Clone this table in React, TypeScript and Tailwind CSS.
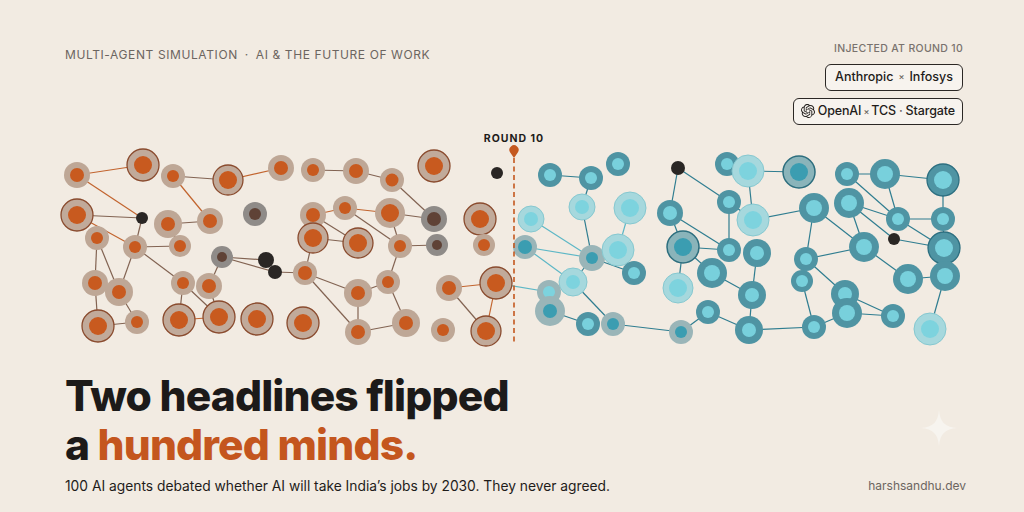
import React from "react";
import { SiOpenai } from "react-icons/si";

type N = [number, number, string, number, number];

const nodes: Record<string, N> = {
  A1: [77, 175, "o", 13, 7],
  A2: [143, 165, "oo", 16, 9],
  A3: [173, 176, "o", 12, 6],
  A4: [228, 180, "oo", 15, 9],
  A5: [281, 168, "o", 13, 7],
  A6: [77, 215, "oo", 16, 9],
  K1: [142, 218, "k", 6, 0],
  A7: [168, 224, "o", 14, 7],
  A8: [210, 221, "o", 13, 7],
  G1: [255, 214, "g", 12, 6],
  A9: [97, 238, "o", 12, 6],
  A10: [135, 247, "o", 12, 6],
  A11: [180, 246, "o", 11, 6],
  G2: [222, 257, "g", 11, 5],
  K2: [266, 260, "k", 8, 0],
  K3: [275, 272, "k", 7, 0],
  A12: [95, 283, "o", 13, 7],
  A13: [119, 292, "o", 14, 7],
  A14: [183, 283, "o", 12, 6],
  A15: [209, 286, "o", 13, 7],
  A16: [98, 326, "oo", 16, 9],
  A17: [137, 322, "o", 12, 6],
  A18: [179, 320, "oo", 16, 9],
  A19: [219, 317, "oo", 16, 9],
  A20: [257, 319, "oo", 16, 9],
  B1: [313, 170, "o", 12, 6],
  B2: [356, 171, "o", 13, 7],
  B3: [392, 180, "o", 12, 6.5],
  B4: [434, 166, "oo", 16, 9],
  K4: [497, 173, "k", 6, 0],
  B5: [313, 215, "o", 13, 7],
  B6: [345, 208, "o", 12, 6],
  B7: [390, 213, "o", 15, 9],
  G3: [434, 219, "g", 13, 7],
  B8: [480, 219, "oo", 16, 9],
  B9: [313, 238, "oo", 15, 9],
  B10: [358, 243, "oo", 15, 9],
  B11: [400, 246, "o", 12, 6],
  G4: [437, 245, "g", 11, 5],
  B12: [484, 245, "o", 11, 6],
  B13: [305, 273, "o", 12, 7],
  B14: [358, 293, "o", 14, 7],
  B15: [388, 282, "o", 12, 6],
  B16: [449, 288, "o", 13, 7],
  B17: [496, 283, "oo", 16, 9],
  B18: [303, 323, "oo", 16, 9],
  B19: [358, 332, "o", 13, 7],
  B20: [406, 323, "o", 14, 7],
  B21: [443, 330, "o", 12, 6],
  B22: [486, 331, "oo", 15, 9],

  T1: [550, 175, "t", 12, 6],
  T2: [591, 178, "t", 12, 6],
  T3: [618, 164, "t", 12, 6],
  K5: [678, 168, "k", 7, 0],
  T4: [727, 164, "t", 12, 6],
  T5: [748, 171, "tp", 16, 9],
  T6: [582, 207, "tp", 13, 7],
  T7: [630, 208, "tp", 16, 9],
  T8: [531, 219, "tp", 13, 7],
  T9: [670, 213, "t", 13, 7],
  T10: [729, 202, "t", 12, 6],
  T11: [753, 220, "tp", 16, 9],
  T12: [525, 247, "tg", 12, 7],
  T13: [592, 258, "tg", 13, 6],
  T14: [618, 250, "tp", 16, 9],
  T15: [683, 247, "to", 16, 9],
  T16: [729, 250, "t", 12, 6],
  T17: [757, 253, "t", 14, 7],
  T18: [634, 273, "t", 12, 6],
  T19: [573, 282, "tp", 14, 7],
  T20: [712, 273, "t", 15, 8],
  T21: [549, 292, "tgl", 12, 6],
  T22: [678, 288, "tp", 15, 9],
  T23: [752, 295, "t", 14, 7],
  T24: [550, 311, "tg", 15, 7],
  T25: [588, 324, "t", 12, 6],
  T26: [613, 324, "tg", 12, 6],
  T27: [708, 312, "t", 12, 6],
  T28: [681, 332, "tg", 12, 6],
  T29: [749, 330, "t", 14, 7],
  U1: [799, 172, "to", 16, 9],
  U2: [847, 174, "t", 12, 6],
  U3: [885, 174, "t", 15, 8],
  U4: [943, 180, "tto", 16, 9],
  U5: [814, 208, "t", 15, 8],
  U6: [849, 203, "t", 15, 8],
  U7: [898, 219, "t", 12, 6],
  U8: [943, 219, "t", 12, 6],
  U9: [864, 247, "t", 15, 8],
  K6: [894, 239, "k", 6, 0],
  U10: [944, 248, "tto", 16, 9],
  U11: [806, 259, "t", 12, 6],
  U12: [802, 281, "t", 11, 6],
  U13: [908, 279, "t", 15, 8],
  U14: [945, 276, "t", 15, 8],
  U15: [845, 294, "t", 14, 7],
  U16: [847, 313, "t", 15, 8],
  U17: [893, 316, "t", 12, 6],
  U18: [814, 327, "t", 12, 6],
  U19: [930, 329, "tp", 16, 9],
};

const edgeSpec = `
A1-A2 o, A1-K1 o, A3-A4 b, A4-A5 o, A3-A8 o, A6-K1 b, A6-A10 o, K1-A10 b, A7-A8 b, A7-A11 b, A10-A11 b,
A9-A12 b, A9-A13 b, A10-A13 b, A12-A13 b, A12-A16 b, A13-A17 b, A16-A17 b, A10-A14 b, A14-A18 b, A14-A19 b,
A15-G2 b, A15-A19 b, A18-A19 o, G2-K2 b, G2-K3 b, K3-B13 b,
B1-B2 b, B2-B3 b, B3-G3 b, B5-B6 o, B6-B7 o, B7-G3 b, B5-B10 b, B6-B11 b, B7-B11 b, B9-B10 b, B5-B9 b, B9-B13 b,
B11-G4 b, B11-B15 b, B13-B14 b, B13-B19 b, B14-B15 b, B14-B19 b, B15-B20 b, B19-B20 b, B16-B17 o, B16-B22 b, B17-B22 o, B17-T21 l,
T1-T2 d, T2-T6 d, T6-T13 d, T7-T14 l, T8-T13 l, T12-T13 l, T12-T19 l, T13-T18 d, T14-T13 l, T19-T13 d, T19-T26 d, T19-T21 l,
T24-T25 d, T26-T28 d, T28-T27 d, T27-T29 d, T29-U18 d, K5-T9 d, K5-T10 d, T9-T15 d, T9-T16 d, T15-T16 d, T15-T22 d, T15-T20 d,
T10-T16 d, T10-T11 d, T4-T5 d, T5-T11 d, T11-U5 d, T5-U1 d, T20-T23 d, T17-T23 d, T23-T29 d,
U2-U3 d, U3-U4 d, U2-U7 d, U3-U7 d, U4-U8 d, U7-U8 d, U6-U7 d, U6-U9 d, U6-K6 d, U7-U10 d, K6-U10 d, U8-U10 d, U5-U9 d,
U5-U11 d, U11-U9 d, U11-U12 d, U11-U15 d, U9-U13 d, U13-U14 d, U10-U14 d, U14-U19 d, U15-U17 d, U16-U17 d, U15-U16 d, U12-U18 d, U18-U16 d
`;

const edgeColors: Record<string, string> = {
  o: "#c2642e",
  b: "#826352",
  d: "#2f7d90",
  l: "#5db7c6",
};

const edges = edgeSpec
  .split(",")
  .map((s) => s.trim())
  .filter(Boolean)
  .map((s) => {
    const [pair, c] = s.split(/\s+/);
    const [a, b] = pair.split("-");
    return { a, b, c };
  });

const style: Record<string, { ring: string; inner: string; stroke?: string; sw?: number }> = {
  o: { ring: "#bea796", inner: "#c85a1f" },
  oo: { ring: "#c1aa9a", inner: "#c85a1f", stroke: "#8a4b2e", sw: 1.3 },
  g: { ring: "#8f8b88", inner: "#5f4236" },
  k: { ring: "#2a2624", inner: "#2a2624" },
  t: { ring: "#4f94a3", inner: "#78d0dc" },
  tto: { ring: "#4f94a3", inner: "#78d0dc", stroke: "#2d6f80", sw: 1.3 },
  tp: { ring: "#a6d8dd", inner: "#7dd3de", stroke: "#86c8d0", sw: 1 },
  tg: { ring: "#9ab5b8", inner: "#3b9db1" },
  tgl: { ring: "#9ab5b8", inner: "#7dd3de" },
  to: { ring: "#8ab4ba", inner: "#3b9db1", stroke: "#2d6e7e", sw: 1.5 },
};

function Network() {
  return (
    <svg width={1024} height={225} viewBox="0 125 1024 225" className="block shrink-0">
      {edges.map((e, i) => {
        const A = nodes[e.a];
        const B = nodes[e.b];
        if (!A || !B) return null;
        return (
          <line key={i} x1={A[0]} y1={A[1]} x2={B[0]} y2={B[1]} stroke={edgeColors[e.c]} strokeWidth={1.2} />
        );
      })}
      {Object.entries(nodes).map(([id, n]) => {
        const [x, y, t, R, r] = n;
        const s = style[t];
        if (t === "k") return <circle key={id} cx={x} cy={y} r={R} fill={s.ring} />;
        return (
          <g key={id}>
            <circle cx={x} cy={y} r={R} fill={s.ring} stroke={s.stroke} strokeWidth={s.sw} />
            <circle cx={x} cy={y} r={r} fill={s.inner} />
          </g>
        );
      })}
      <text
        x={514}
        y={142}
        textAnchor="middle"
        fontSize={10.5}
        fontWeight={700}
        letterSpacing={1}
        fill="#1f1c1a"
        fontFamily="Inter, sans-serif"
      >
        ROUND 10
      </text>
      <path d="M514 158 L510.2 152.5 A4.6 4.6 0 1 1 517.8 152.5 Z" fill="#c4581f" />
      <line x1={514} y1={158} x2={514} y2={345} stroke="#c4581f" strokeWidth={1.6} strokeDasharray="5 3.5" />
    </svg>
  );
}

export default function App() {
  return (
    <div
      className="w-[1024px] h-[512px] bg-[#f2ebe2] flex flex-col overflow-hidden"
      style={{ fontFamily: "Inter, 'Noto Sans', sans-serif" }}
    >
      <div className="h-[125px] shrink-0 flex justify-between pl-[65px] pr-[61px] pt-[44px]">
        <div className="text-[12px] leading-none tracking-[0.05em] text-[#6c6560] mt-[5px]">
          MULTI-AGENT SIMULATION <span className="mx-[3px]">·</span> AI &amp; THE FUTURE OF WORK
        </div>
        <div className="flex flex-col items-end">
          <div className="text-[10.5px] leading-none font-medium tracking-[0.03em] text-[#79726d]">
            INJECTED AT ROUND 10
          </div>
          <div className="mt-[9px] h-[28px] px-[9px] flex items-center gap-[5px] rounded-[6px] border-[1.5px] border-[#2b2724] bg-[#f7f3ee] text-[12.5px] font-medium text-[#1f1c1a]">
            <span>Anthropic</span>
            <span className="text-[9px] text-[#6c6560]">×</span>
            <span>Infosys</span>
          </div>
          <div className="mt-[7px] h-[28px] px-[7px] flex items-center gap-[2px] rounded-[6px] border-[1.5px] border-[#2b2724] bg-[#f7f3ee] text-[12.5px] font-medium text-[#1f1c1a] tracking-[-0.01em]">
            <SiOpenai className="w-[14px] h-[14px] text-[#1f1c1a] mr-[1px]" />
            <span>OpenAI</span>
            <span className="text-[9px] text-[#6c6560]">×</span>
            <span>TCS</span>
            <span className="text-[#6c6560] mx-[1px]">·</span>
            <span>Stargate</span>
          </div>
        </div>
      </div>
      <Network />
      <div className="flex-1 flex justify-between items-end pl-[65px] pr-[58px] pb-[16px]">
        <div className="flex flex-col">
          <div className="text-[42.5px] leading-[49px] font-extrabold tracking-[-0.02em] text-[#1c1a19]">
            <div>Two headlines flipped</div>
            <div>
              a <span className="text-[#c4561e]">hundred minds.</span>
            </div>
          </div>
          <div className="mt-[7px] text-[13.8px] leading-[20px] text-[#1f1c1a]">
            100 AI agents debated whether AI will take India’s jobs by 2030. They never agreed.
          </div>
        </div>
        <div className="flex flex-col items-end">
          <svg width="36" height="36" viewBox="0 0 36 36" className="mr-[9px] mb-[32px]">
            <path
              d="M18 0 C19 12 24 17 36 18 C24 19 19 24 18 36 C17 24 12 19 0 18 C12 17 17 12 18 0 Z"
              fill="#f7f4ef"
            />
          </svg>
          <div className="text-[12px] leading-[16px] text-[#6c6560] mb-[2px]">harshsandhu.dev</div>
        </div>
      </div>
    </div>
  );
}
